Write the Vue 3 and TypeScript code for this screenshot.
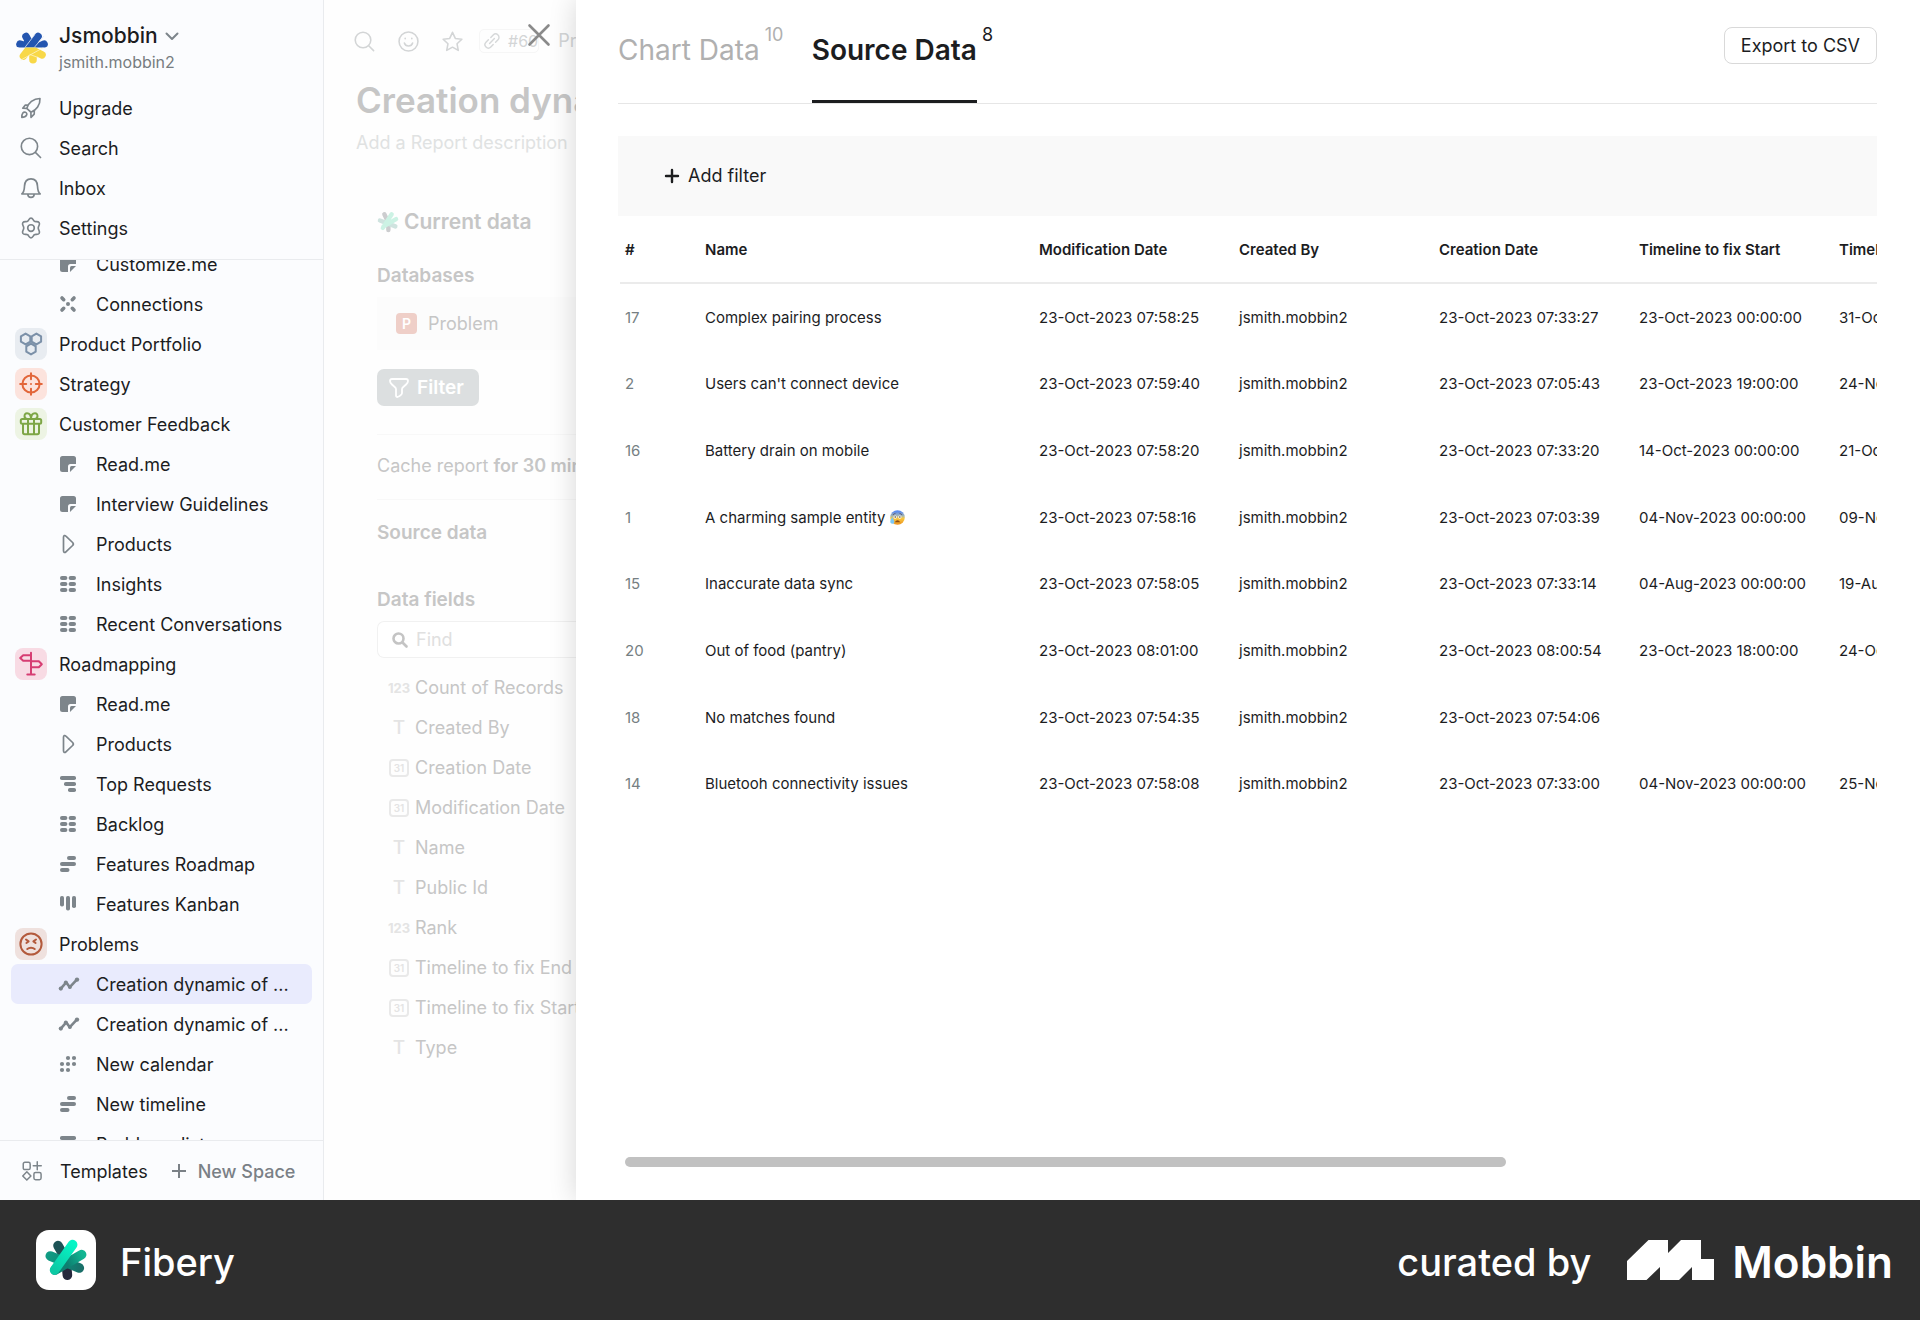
<script setup lang="ts">
import { ref } from 'vue'

type Item = { label: string; icon: string; tone?: string; active?: boolean }

const icons: Record<string, string> = {
  note: '<path fill="currentColor" d="M2.500 0h11A2.500 2.500 0 0 1 16 2.500V8h-5.500A2.500 2.500 0 0 0 8 10.500V16H2.500A2.500 2.500 0 0 1 0 13.500v-11A2.500 2.500 0 0 1 2.500 0z"/><path fill="currentColor" d="M11.500 10H16l-6 6v-4.500a1.500 1.500 0 0 1 1.500-1.500z"/>',
  nodes: '<g stroke="currentColor" stroke-width="3.600" stroke-linecap="round"><path d="M2 2l1.700 1.700M14 2l-1.700 1.700M2 14l1.700-1.700M14 14l-1.700-1.700"/></g><circle cx="8" cy="8" r="2" fill="currentColor"/>',
  play: '<path fill="none" stroke="currentColor" stroke-width="1.700" stroke-linejoin="round" d="M3.500 1.200v13.600c0 1.700 1.300 2.200 2.400 1.100l6.700-6.400c.9-.9.9-2.100 0-3L5.900.1C4.800-1 3.500-.5 3.500 1.200z"/>',
  grid: '<g fill="currentColor"><rect width="7.400" height="4" rx="2"/><rect x="8.600" width="7.400" height="4" rx="2"/><rect y="6" width="7.400" height="4" rx="2"/><rect x="8.600" y="6" width="7.400" height="4" rx="2"/><rect y="12" width="7.400" height="4" rx="2"/><rect x="8.600" y="12" width="7.400" height="4" rx="2"/></g>',
  list: '<g fill="currentColor"><rect width="16" height="4" rx="1.800"/><rect x="4" y="6" width="12" height="4" rx="1.800"/><rect x="8" y="12" width="8" height="4" rx="1.800"/></g>',
  timeline: '<g fill="currentColor"><rect x="7" width="9" height="4" rx="2"/><rect y="6" width="16" height="4" rx="2"/><rect y="12" width="9.500" height="4" rx="2"/></g>',
  kanban: '<g fill="currentColor"><rect width="4" height="10.500" rx="1.800"/><rect x="6" width="4" height="14.500" rx="1.800"/><rect x="12" width="4" height="12" rx="1.800"/></g>',
  chart: '<path fill="none" stroke="currentColor" stroke-width="2.600" stroke-linejoin="round" stroke-linecap="round" d="M.8 12.600l5.400-6.200 3.600 4.800 6.800-7.400"/><g fill="currentColor"><circle cx=".8" cy="12.600" r="2.100"/><circle cx="5.800" cy="6.400" r="2"/><circle cx="9.900" cy="11" r="2"/><circle cx="17" cy="3.600" r="2.200"/></g>',
  dots: '<g fill="currentColor"><circle cx="8" cy="2" r="2.100"/><circle cx="14" cy="2" r="2.100"/><circle cx="2" cy="8" r="2.100"/><circle cx="8" cy="8" r="2.100"/><circle cx="14" cy="8" r="2.100"/><circle cx="2" cy="14" r="2.100"/><circle cx="8" cy="14" r="2.100"/></g>',
  hexes: '<path d="M6.600 1.600l4.700 2.700v5.400l-4.700 2.700-4.700-2.700V4.300zM17.400 1.600l4.700 2.700v5.400l-4.700 2.700-4.700-2.700V4.300zM12 11.600l4.700 2.700v5.400L12 22.400l-4.700-2.700v-5.400z"/>',
  target: '<circle cx="12" cy="12" r="8.600"/><path d="M12 1.200v6M12 16.800v6M1.200 12h6M16.800 12h6M12 11.900v.2"/>',
  gift: '<rect x="1.800" y="7" width="20.400" height="4.800" rx="1.500"/><path d="M4 12v8.500C4 21.600 4.600 22.200 5.700 22.200h12.600c1.100 0 1.700-.6 1.700-1.700V12M9 7v15M15 7v15M8.500 7C4.500 7 4.700 1.300 8 1.300c2.500 0 4 2.500 4 5.700 0-3.200 1.500-5.700 4-5.700 3.300 0 3.500 5.700-.5 5.700"/>',
  sign: '<path d="M12 .8v21.500M8.300 22.500h7.400M12 3.200H4.200L1.200 6l3 2.800H12M12 9.300h7.800l3 3-3 3H12"/>',
  angry: '<circle cx="12" cy="12" r="10.600"/><path d="M7 7.500l2.600 1.900L7.400 11M17 7.500l-2.600 1.900 2.200 1.600M8.300 17c1.900-1.700 5.500-1.700 7.400 0"/>',
  rocket: '<path d="M7.300 12.500C9 6.500 14.500 1.700 21.800 1.600c.4 7-4 12.800-9.800 15zM7.400 12.400l4.700 4.300M8.500 8.800H5.800L3 12.200l4.300.4M15.600 15.300l-.1 3.300-3.500 3.600-.1-5.500M2 22.300c-.1-4.600 1.700-6.300 4-5.600 2.700.9 1.700 5.600-4 5.600z"/>',
  search: '<circle cx="10.300" cy="10.300" r="8.900"/><path d="M16.800 16.800l5.600 5.600"/>',
  bell: '<path d="M2 18.500c2.700-2.200 2.700-4.800 2.900-8.500.2-4.800 2.900-8 7.100-8s6.900 3.200 7.100 8c.2 3.700.2 6.300 2.900 8.500zM8.500 18.800c.2 4.600 6.800 4.600 7 0"/>',
  gear: '<circle cx="12" cy="12" r="3.600"/><path d="M12 1.300c2.300 0 2.300 2.600 3.700 3.400 1.500.9 3.900-.6 5.200 1.400 1.400 2.400-1 3.300-1 5.900s2.400 3.500 1 5.900c-1.300 2-3.700.5-5.200 1.400-1.400.8-1.400 3.400-3.700 3.400s-2.300-2.600-3.700-3.400c-1.500-.9-3.900.6-5.200-1.400-1.400-2.400 1-3.300 1-5.900s-2.400-3.500-1-5.900c1.300-2 3.700-.5 5.200-1.400C9.700 3.900 9.700 1.300 12 1.300z"/>',
  smile: '<circle cx="12" cy="12" r="10.800"/><path d="M7.300 13.700c1.300 4.600 8.100 4.600 9.400 0M8.200 8.200v.6M15.800 8.200v.6"/>',
  star: '<path d="M12 1.500l3.200 7 7.500.9-5.500 5.200 1.400 7.600L12 18.500l-6.600 3.700 1.400-7.600L1.300 9.400l7.500-.9z"/>',
  templates: '<rect x="1.500" y="1.500" width="8.300" height="8.800" rx="2"/><path d="M18.300 1v9.600M13.500 5.800h9.600M5.800 12.900l4.900 5-4.900 5-4.900-5z"/><rect x="14.300" y="13.700" width="8.600" height="8.800" rx="2"/>',
}

const topMenu: Item[] = [
  { label: 'Upgrade', icon: 'rocket' },
  { label: 'Search', icon: 'search' },
  { label: 'Inbox', icon: 'bell' },
  { label: 'Settings', icon: 'gear' },
]

const tree: Item[] = [
  { label: 'Customize.me', icon: 'note' },
  { label: 'Connections', icon: 'nodes' },
  { label: 'Product Portfolio', icon: 'hexes', tone: 'slate' },
  { label: 'Strategy', icon: 'target', tone: 'orange' },
  { label: 'Customer Feedback', icon: 'gift', tone: 'green' },
  { label: 'Read.me', icon: 'note' },
  { label: 'Interview Guidelines', icon: 'note' },
  { label: 'Products', icon: 'play' },
  { label: 'Insights', icon: 'grid' },
  { label: 'Recent Conversations', icon: 'grid' },
  { label: 'Roadmapping', icon: 'sign', tone: 'pink' },
  { label: 'Read.me', icon: 'note' },
  { label: 'Products', icon: 'play' },
  { label: 'Top Requests', icon: 'list' },
  { label: 'Backlog', icon: 'grid' },
  { label: 'Features Roadmap', icon: 'timeline' },
  { label: 'Features Kanban', icon: 'kanban' },
  { label: 'Problems', icon: 'angry', tone: 'brown' },
  { label: 'Creation dynamic of ...', icon: 'chart', active: true },
  { label: 'Creation dynamic of ...', icon: 'chart' },
  { label: 'New calendar', icon: 'dots' },
  { label: 'New timeline', icon: 'timeline' },
  { label: 'Problems list', icon: 'list' },
]

const fields: { kind: 'num' | 'text' | 'date'; label: string }[] = [
  { kind: 'num', label: 'Count of Records' },
  { kind: 'text', label: 'Created By' },
  { kind: 'date', label: 'Creation Date' },
  { kind: 'date', label: 'Modification Date' },
  { kind: 'text', label: 'Name' },
  { kind: 'text', label: 'Public Id' },
  { kind: 'num', label: 'Rank' },
  { kind: 'date', label: 'Timeline to fix End' },
  { kind: 'date', label: 'Timeline to fix Start' },
  { kind: 'text', label: 'Type' },
]

const columns = ['#', 'Name', 'Modification Date', 'Created By', 'Creation Date', 'Timeline to fix Start', 'Timeline to fix End']

type Row = { id: number; name: string; worried?: boolean; modified: string; created: string; start: string; end: string }
const rows: Row[] = [
  { id: 17, name: 'Complex pairing process', modified: '23-Oct-2023 07:58:25', created: '23-Oct-2023 07:33:27', start: '23-Oct-2023 00:00:00', end: '31-Oct-2023' },
  { id: 2, name: "Users can't connect device", modified: '23-Oct-2023 07:59:40', created: '23-Oct-2023 07:05:43', start: '23-Oct-2023 19:00:00', end: '24-Nov-2023' },
  { id: 16, name: 'Battery drain on mobile', modified: '23-Oct-2023 07:58:20', created: '23-Oct-2023 07:33:20', start: '14-Oct-2023 00:00:00', end: '21-Oct-2023' },
  { id: 1, name: 'A charming sample entity', worried: true, modified: '23-Oct-2023 07:58:16', created: '23-Oct-2023 07:03:39', start: '04-Nov-2023 00:00:00', end: '09-Nov-2023' },
  { id: 15, name: 'Inaccurate data sync', modified: '23-Oct-2023 07:58:05', created: '23-Oct-2023 07:33:14', start: '04-Aug-2023 00:00:00', end: '19-Aug-2023' },
  { id: 20, name: 'Out of food (pantry)', modified: '23-Oct-2023 08:01:00', created: '23-Oct-2023 08:00:54', start: '23-Oct-2023 18:00:00', end: '24-Oct-2023' },
  { id: 18, name: 'No matches found', modified: '23-Oct-2023 07:54:35', created: '23-Oct-2023 07:54:06', start: '', end: '' },
  { id: 14, name: 'Bluetooh connectivity issues', modified: '23-Oct-2023 07:58:08', created: '23-Oct-2023 07:33:00', start: '04-Nov-2023 00:00:00', end: '25-Nov-2023' },
]

const query = ref('')
</script>

<template>
  <div class="page">
    <div class="shell">
      <nav class="sidebar">
        <header class="top">
          <button class="workspace">
            <svg class="flower" viewBox="0 0 32 32" width="32" height="32" aria-hidden="true">
              <defs>
                <clipPath id="sky"><rect width="32" height="15.500" /></clipPath>
                <clipPath id="field"><rect y="15.500" width="32" height="17" /></clipPath>
              </defs>
              <g clip-path="url(#sky)" stroke="#2456b0" stroke-width="7.600" stroke-linecap="round">
                <path d="M10 4.500l6 11M22 4.500L12 17M4 12.200l14 4M28 12.200L16 18" />
                <path d="M18.500 3L8.500 16M27.500 4.500L18 15.800" stroke="#dfe6f5" stroke-width=".8" />
              </g>
              <g clip-path="url(#field)" stroke="#f8d848" stroke-width="7.600" stroke-linecap="round">
                <path d="M17 27.800V18M7.500 24L13 17M26 22.800L14 17M16 17v4" />
                <path d="M5 28L27 15.800M22 25.500l-8-3" stroke="#fdf4c8" stroke-width=".8" />
              </g>
            </svg>
            <span class="who">
              <span class="ws-name">Jsmobbin
                <svg viewBox="0 0 14 9" width="14" height="9" fill="none" stroke="#7d858b" stroke-width="2" stroke-linecap="round" stroke-linejoin="round" aria-hidden="true"><path d="M1.500 1.500L7 7l5.500-5.500" /></svg>
              </span>
              <span class="ws-user">jsmith.mobbin2</span>
            </span>
          </button>
          <ul>
            <li v-for="m in topMenu" :key="m.label">
              <a href="#" class="row">
                <span class="slot"><svg class="line" viewBox="0 0 24 24" width="22" height="22" v-html="icons[m.icon]" /></span>
                <span class="label">{{ m.label }}</span>
              </a>
            </li>
          </ul>
        </header>
        <div class="tree">
          <ul>
            <li v-for="(t, i) in tree" :key="i">
              <a href="#" class="row" :class="{ child: !t.tone, active: t.active }">
                <span v-if="t.tone" class="slot badge" :class="t.tone"><svg class="line" viewBox="0 0 24 24" width="24" height="24" v-html="icons[t.icon]" /></span>
                <svg v-else class="glyph" viewBox="0 0 16 16" width="16" height="16" v-html="icons[t.icon]" />
                <span class="label">{{ t.label }}</span>
              </a>
            </li>
          </ul>
        </div>
        <footer class="bottom">
          <a href="#" class="templates">
            <svg class="line" viewBox="0 0 24 24" width="20" height="20" v-html="icons.templates" />
            <span class="label">Templates</span>
          </a>
          <button class="new-space">
            <svg viewBox="0 0 14 14" width="14" height="14" stroke="currentColor" stroke-width="2" aria-hidden="true"><path d="M7 0v14M0 7h14" /></svg>
            <span class="label">New Space</span>
          </button>
        </footer>
      </nav>

      <main class="report">
        <div class="tools">
          <button aria-label="Search"><svg class="line" viewBox="0 0 24 24" width="21" height="21" v-html="icons.search" /></button>
          <button aria-label="Icon"><svg class="line" viewBox="0 0 24 24" width="21" height="21" v-html="icons.smile" /></button>
          <button aria-label="Favorite"><svg class="line" viewBox="0 0 24 24" width="21" height="21" v-html="icons.star" /></button>
          <a href="#" class="ticket">
            <svg viewBox="0 0 20 20" width="16" height="16" fill="none" stroke="#d6d8d9" stroke-width="1.800" stroke-linecap="round" aria-hidden="true">
              <path d="M7 13l6-6M8.500 5.500l3-3a4 4 0 0 1 6 6l-3 3M11.500 14.500l-3 3a4 4 0 0 1-6-6l3-3" />
            </svg>
            #60
          </a>
          <span class="crumb">Pr</span>
          <button class="close" aria-label="Close">
            <svg viewBox="0 0 22 22" width="22" height="22" stroke="#8a8a8a" stroke-width="2.600" stroke-linecap="round"><path d="M1.500 1.500l19 19M20.500 1.500l-19 19" /></svg>
          </button>
        </div>
        <h1>Creation dynamic</h1>
        <p class="desc">Add a Report description</p>
        <section class="settings">
          <h2>
            <svg viewBox="0 0 60 60" width="22" height="22" aria-hidden="true">
              <g stroke-width="12" stroke-linecap="round">
                <path d="M20 9l8 16M31 52V30" stroke="#cccdcf" />
                <path d="M8 26l42 16" stroke="#cfe3df" />
                <path d="M52 22L18 42M40 9L16 46" stroke="#ccf2e4" />
              </g>
            </svg>
            Current data
          </h2>
          <h3 class="db-title">Databases</h3>
          <div class="db"><span class="p-mark">P</span>Problem</div>
          <button class="filter">
            <svg viewBox="0 0 20 20" width="20" height="20" fill="none" stroke="#fff" stroke-width="1.800" stroke-linejoin="round" aria-hidden="true"><path d="M1 3q0-2 2-2h14q2 0 2 2c0 2-1 2.500-2.500 4S13 9.500 13 11v4c0 2-2 3-4.500 4C7.500 19 7 18.500 7 17.500V11c0-1.500-2-2.500-3.500-4S1 5 1 3z" /></svg>
            Filter
          </button>
          <p class="cache">Cache report <b>for 30 min</b></p>
          <h3 class="src-title">Source data</h3>
          <h3 class="fields-title">Data fields</h3>
          <label class="find">
            <svg viewBox="0 0 16 16" width="16" height="16" fill="none" stroke="#c4c4c4" stroke-width="2.600" stroke-linecap="round" aria-hidden="true"><circle cx="6.500" cy="6.500" r="5" /><path d="M10.500 10.500l4 4" /></svg>
            <input v-model="query" type="text" placeholder="Find" aria-label="Find" />
          </label>
          <ul class="fields">
            <li v-for="f in fields" :key="f.label">
              <span class="kind">
                <span v-if="f.kind === 'num'" class="num">123</span>
                <span v-else-if="f.kind === 'text'" class="tee">T</span>
                <span v-else class="cal">31</span>
              </span>
              {{ f.label }}
            </li>
          </ul>
        </section>
      </main>

      <section class="drawer">
        <header class="tabs">
          <button class="tab">Chart Data<sup>10</sup></button>
          <button class="tab on">Source Data<sup>8</sup></button>
          <button class="export">Export to CSV</button>
        </header>
        <div class="filters">
          <button>
            <svg viewBox="0 0 14 14" width="14" height="14" stroke="#1c1d1f" stroke-width="2.400" stroke-linecap="round" aria-hidden="true"><path d="M7 1v12M1 7h12" /></svg>
            Add filter
          </button>
        </div>
        <div class="scroller">
          <table>
            <colgroup>
              <col class="c-id" /><col class="c-name" /><col v-for="n in 5" :key="n" class="c-data" />
            </colgroup>
            <thead>
              <tr><th v-for="c in columns" :key="c" scope="col">{{ c }}</th></tr>
            </thead>
            <tbody>
              <tr v-for="r in rows" :key="r.id">
                <td class="id">{{ r.id }}</td>
                <td>
                  {{ r.name }}
                  <svg v-if="r.worried" class="emoji" viewBox="0 0 32 32" width="15" height="15" role="img" aria-label="Worried face">
                    <defs>
                      <linearGradient id="face" x1="0" y1="0" x2="0" y2="1">
                        <stop offset=".1" stop-color="#5b8def" /><stop offset=".4" stop-color="#a9b8b0" /><stop offset=".55" stop-color="#f8c840" /><stop offset="1" stop-color="#ee9420" />
                      </linearGradient>
                    </defs>
                    <circle cx="16" cy="16" r="15.500" fill="url(#face)" />
                    <path d="M6 10q4-1 6-4M26 10q-4-1-6-4" fill="none" stroke="#4a3b52" stroke-width="1.500" />
                    <circle cx="11" cy="15" r="3.500" fill="#fff" /><circle cx="21" cy="15" r="3.500" fill="#fff" />
                    <circle cx="11" cy="15" r="1.600" fill="#4a2c12" /><circle cx="21" cy="15" r="1.600" fill="#4a2c12" />
                    <path d="M10 26q6-8 12 0z" fill="#8a4a14" />
                    <path d="M5 15q-6 9-4 12c2 3 7 3 8 0q1-3-4-12z" fill="#7cc8f4" />
                  </svg>
                </td>
                <td>{{ r.modified }}</td>
                <td>jsmith.mobbin2</td>
                <td>{{ r.created }}</td>
                <td>{{ r.start }}</td>
                <td>{{ r.end }}</td>
              </tr>
            </tbody>
          </table>
        </div>
        <div class="thumb"></div>
      </section>
    </div>

    <footer class="credit">
      <span class="app-mark">
        <svg viewBox="0 0 60 60" width="60" height="60" aria-hidden="true">
          <defs>
            <linearGradient id="bar" gradientUnits="userSpaceOnUse" x1="18" y1="40" x2="37" y2="14"><stop offset="0" stop-color="#0cc9a4" /><stop offset="1" stop-color="#06f5c6" /></linearGradient>
            <linearGradient id="right" gradientUnits="userSpaceOnUse" x1="24" y1="36" x2="46" y2="24"><stop offset=".3" stop-color="#0d7f70" /><stop offset="1" stop-color="#12b592" /></linearGradient>
            <linearGradient id="left" gradientUnits="userSpaceOnUse" x1="10" y1="26" x2="46" y2="40"><stop offset="0" stop-color="#119c84" /><stop offset=".5" stop-color="#0b8a78" /><stop offset="1" stop-color="#1a6e68" /></linearGradient>
          </defs>
          <g stroke-width="9.600" stroke-linecap="round">
            <path d="M22 15.600l8 14" stroke="#1d5356" />
            <path d="M31.400 45.200L30 30" stroke="#26283c" />
            <path d="M14.300 26l29 12" stroke="url(#left)" />
            <path d="M45.600 24.600L19 40" stroke="url(#right)" />
            <path d="M36.600 14.600L18.600 40" stroke="url(#bar)" />
          </g>
        </svg>
      </span>
      <span class="app-name">Fibery</span>
      <span class="by">curated by</span>
      <svg class="m-mark" viewBox="0 0 87 40" width="87" height="40" aria-hidden="true"><path fill="#fff" d="M0 21L21.500 0H41v13L54 0h20v19h13v21H65V27L52 40H33V27L19.500 40H0z" /></svg>
      <span class="brand">Mobbin</span>
    </footer>
  </div>
</template>

<style>
body {
  background: #fff;
}
</style>

<style scoped>
* {
  box-sizing: border-box;
}
.page {
  display: flex;
  flex-direction: column;
  height: 100vh;
  font: 400 18px/24px Inter, "Liberation Sans", sans-serif;
  color: #1c1d1f;
  overflow: hidden;
}
ul {
  list-style: none;
  margin: 0;
  padding: 0;
}
h1, h2, h3, p {
  margin: 0;
}
a {
  color: inherit;
  text-decoration: none;
}
button {
  font: inherit;
  color: inherit;
  background: none;
  border: 0;
  padding: 0;
  white-space: nowrap;
}
svg {
  flex: none;
  overflow: visible;
}
.line {
  fill: none;
  stroke: currentColor;
  stroke-width: 1.800;
  stroke-linecap: round;
  stroke-linejoin: round;
}
.label {
  padding-top: 2px;
}
.shell {
  display: flex;
  flex: 1;
  min-height: 0;
}

/* sidebar */
.sidebar {
  width: 324px;
  flex: none;
  display: flex;
  flex-direction: column;
  background: #fbfcfe;
  border-right: 1px solid #e9ebee;
}
.top {
  padding-top: 20px;
  height: 260px;
  flex: none;
  border-bottom: 1px solid #e9ebee;
}
.workspace {
  display: flex;
  gap: 11px;
  padding-left: 16px;
  height: 68px;
  text-align: left;
}
.flower {
  margin-top: 12px;
}
.who {
  display: flex;
  flex-direction: column;
}
.ws-name {
  display: flex;
  align-items: center;
  gap: 7px;
  font-size: 21px;
  font-weight: 500;
  line-height: 32px;
}
.ws-user {
  font-size: 16px;
  line-height: 20px;
  color: #777c80;
}
.row {
  display: flex;
  align-items: center;
  gap: 12px;
  height: 40px;
  margin: 0 11px;
  padding-left: 4px;
  border-radius: 7px;
  white-space: nowrap;
}
.slot {
  display: grid;
  place-items: center;
  width: 32px;
  height: 32px;
  border-radius: 8px;
  color: #7d858b;
}
.badge .line {
  stroke-width: 2;
}
.slate { background: #e8ecf1; color: #7b90a8; }
.orange { background: #fce3dd; color: #e2663a; }
.green { background: #edf4e4; color: #7da646; }
.pink { background: #f8dbe4; color: #d63d72; }
.brown { background: #efe1de; color: #b35a3c; }
.child {
  gap: 20px;
  padding-left: 49px;
}
.glyph {
  color: #7d858b;
}
.active {
  background: #e9ebfd;
}
.tree {
  flex: 1;
  min-height: 0;
  overflow: hidden;
}
.tree ul {
  margin-top: -16px;
}
.bottom {
  display: flex;
  align-items: center;
  gap: 24px;
  height: 60px;
  flex: none;
  padding-left: 22px;
  border-top: 1px solid #e9ebee;
}
.templates, .new-space {
  display: flex;
  align-items: center;
}
.templates {
  gap: 18px;
}
.templates svg {
  color: #7d858b;
}
.new-space {
  gap: 12px;
  font-weight: 500;
  color: #7a8086;
}

/* dimmed report */
.report {
  width: 252px;
  flex: none;
  overflow: hidden;
  white-space: nowrap;
  background: #fefefe;
  color: #c6c6c6;
}
.tools {
  position: relative;
  display: flex;
  align-items: center;
  gap: 23px;
  height: 40px;
  margin-top: 21px;
  padding-left: 30px;
  color: #d3d5d6;
}
.tools button {
  display: flex;
}
.ticket {
  display: flex;
  align-items: center;
  gap: 8px;
  height: 24px;
  margin-left: -7px;
  padding: 0 0 0 4px;
  border: 1px solid #f6f6f6;
  border-radius: 5px;
  font-size: 16px;
}
.crumb {
  margin-left: -4px;
}
.tools .close {
  position: absolute;
  left: 204px;
  top: 3px;
}
h1 {
  margin: 16px 0 0 32px;
  font-size: 35px;
  line-height: 46px;
  font-weight: 600;
}
.desc {
  margin: 8px 0 0 32px;
  color: #e0e2e2;
}
.settings {
  padding: 52px 0 0 53px;
}
h2 {
  display: flex;
  align-items: center;
  gap: 5px;
  font-size: 21px;
  line-height: 30px;
  font-weight: 600;
}
h3 {
  font-size: 19px;
  line-height: 24px;
  font-weight: 600;
}
.db-title {
  margin-top: 27px;
}
.db {
  display: flex;
  align-items: center;
  gap: 11px;
  height: 53px;
  margin-top: 9px;
  padding-left: 19px;
  background: #fcfcfc;
}
.p-mark {
  width: 21px;
  height: 21px;
  border-radius: 4px;
  background: #efcfc8;
  color: #fff;
  font-size: 14px;
  font-weight: 600;
  line-height: 21px;
  text-align: center;
}
.filter {
  display: flex;
  align-items: center;
  gap: 8px;
  height: 37px;
  margin: 19px 0 28px;
  padding: 0 15px 0 12px;
  border-radius: 7px;
  background: #dcdfe0;
  color: #fff;
  font-size: 19px;
  font-weight: 600;
}
.cache {
  border: solid #f8f8f8;
  border-width: 1px 0;
  padding: 19px 0 21px;
}
.cache b {
  font-weight: 600;
}
.src-title {
  margin-top: 21px;
}
.fields-title {
  margin-top: 43px;
}
.find {
  display: flex;
  align-items: center;
  gap: 8px;
  height: 37px;
  margin-top: 9px;
  padding-left: 14px;
  border: 1px solid #f1f1f1;
  border-right: 0;
  border-radius: 7px 0 0 7px;
  background: #fff;
}
.find input {
  width: 120px;
  border: 0;
  padding: 0;
  background: none;
  font: inherit;
  color: #c6c6c6;
  outline: none;
}
.find input::placeholder {
  color: #e0e0e0;
  opacity: 1;
}
.fields {
  margin-top: 10px;
}
.fields li {
  display: flex;
  align-items: center;
  gap: 6px;
  height: 40px;
  padding-left: 12px;
}
.kind {
  display: flex;
  justify-content: center;
  width: 20px;
  color: #e4e4e4;
}
.num {
  font-size: 13px;
  font-weight: 700;
}
.tee {
  font-size: 19px;
  font-weight: 500;
}
.cal {
  width: 20px;
  height: 18px;
  border: 2px solid #e9e9e9;
  border-radius: 4px;
  font-size: 10px;
  font-weight: 600;
  line-height: 14px;
  text-align: center;
}

/* drawer */
.drawer {
  position: relative;
  display: flex;
  flex-direction: column;
  flex: 1;
  min-width: 0;
  padding: 0 43px 33px 42px;
  background: #fff;
  box-shadow: 0 0 26px rgba(0, 0, 0, 0.16);
  clip-path: inset(0 0 0 -40px);
}
.tabs {
  display: flex;
  align-items: flex-start;
  gap: 22px;
  height: 104px;
  flex: none;
  border-bottom: 1px solid #e6e6e6;
}
.tab {
  position: relative;
  height: 103px;
  padding-bottom: 4px;
  margin-right: 30px;
  font-size: 28px;
  color: #b0b0b0;
}
.tab.on {
  font-weight: 600;
  color: #1c1d1f;
  border-bottom: 3px solid #1c1d1f;
  padding-bottom: 1px;
}
.tab sup {
  position: absolute;
  left: 100%;
  top: 23px;
  margin-left: 5px;
  font-size: 18px;
  font-weight: 400;
  line-height: 24px;
}
.export {
  height: 37px;
  margin: 27px 0 0 auto;
  padding: 0 16px;
  border: 1px solid #d9d9d9;
  border-radius: 8px;
}
.filters {
  display: flex;
  align-items: center;
  height: 80px;
  flex: none;
  margin-top: 32px;
  padding-left: 47px;
  background: #f9f9f9;
}
.filters button {
  display: flex;
  align-items: center;
  gap: 9px;
}
.scroller {
  flex: 1;
  min-height: 0;
  overflow: hidden;
  margin-left: 2px;
}
table {
  table-layout: fixed;
  width: 1414px;
  border-collapse: collapse;
  font-size: 15px;
  line-height: 20px;
}
.c-id { width: 80px; }
.c-name { width: 334px; }
.c-data { width: 200px; }
th, td {
  padding: 2px 0 0 5px;
  text-align: left;
  white-space: nowrap;
}
th {
  height: 67px;
  border-bottom: 2px solid #ebebeb;
  font-weight: 600;
}
td {
  height: 67px;
}
tbody tr:nth-child(3n + 2) td {
  height: 66px;
}
.id {
  color: #767f83;
}
.emoji {
  vertical-align: -2px;
}
.thumb {
  width: 70%;
  height: 10px;
  margin-left: 7px;
  border-radius: 5px;
  background: #c1c1c1;
}

/* credit bar */
.credit {
  display: flex;
  align-items: center;
  height: 120px;
  flex: none;
  padding: 0 27px 0 36px;
  background: #2e2e2e;
  color: #fff;
  line-height: 52px;
}
.app-mark {
  width: 60px;
  height: 60px;
  border-radius: 13px;
  background: #fff;
}
.app-mark svg {
  display: block;
}
.app-name, .by, .brand {
  padding-top: 4px;
}
.app-name, .by {
  font-size: 38px;
  font-weight: 500;
}
.app-name {
  margin-left: 24px;
}
.by {
  margin-left: auto;
}
.m-mark {
  margin: 0 18px 0 36px;
}
.brand {
  font-size: 44px;
  font-weight: 600;
}
</style>
